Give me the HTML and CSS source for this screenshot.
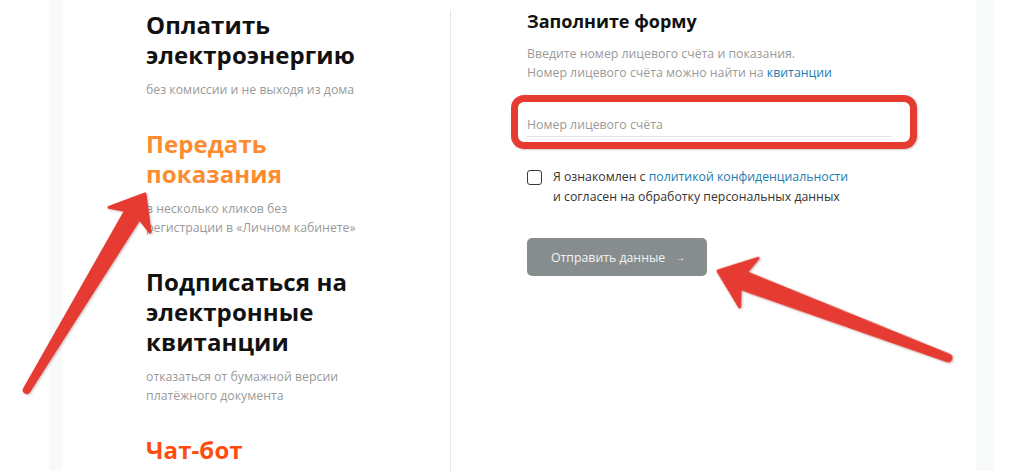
FILE: index.html
```html
<!DOCTYPE html>
<html lang="ru">
<head>
<meta charset="utf-8">
<title>Передать показания</title>
<link rel="stylesheet" href="styles.css">
</head>
<body>
<div class="page">
  <div class="card">
    <div class="services">
      <div class="service">
        <h2 class="service-title">Оплатить<br>электроэнергию</h2>
        <p class="service-desc">без комиссии и не выходя из дома</p>
      </div>
      <div class="service">
        <h2 class="service-title service-title--active">Передать<br>показания</h2>
        <p class="service-desc">в несколько кликов без<br>регистрации в «Личном кабинете»</p>
      </div>
      <div class="service">
        <h2 class="service-title">Подписаться на<br>электронные<br>квитанции</h2>
        <p class="service-desc">отказаться от бумажной версии<br>платёжного документа</p>
      </div>
      <div class="service">
        <h2 class="service-title service-title--bot">Чат-бот</h2>
        <p class="service-desc">задать вопрос</p>
      </div>
    </div>
    <div class="divider"></div>
    <form class="form">
      <h3 class="form-title">Заполните форму</h3>
      <p class="form-desc">Введите номер лицевого счёта и показания.<br>Номер лицевого счёта можно найти на <a class="link" href="#">квитанции</a></p>
      <div class="field">
        <input class="field-input" type="text" placeholder="Номер лицевого счёта">
        <span class="highlight"></span>
      </div>
      <label class="agree">
        <span class="checkbox"></span>
        <span class="agree-text">Я ознакомлен с <a class="link" href="#">политикой конфиденциальности</a><br>и согласен на обработку персональных данных</span>
      </label>
      <button class="submit" type="button">Отправить данные<span class="submit-arrow">→</span></button>
    </form>
  </div>
</div>
<svg class="annotations" width="1024" height="471" viewBox="0 0 1024 471" aria-hidden="true">
  <defs>
    <filter id="shadow" x="-20%" y="-20%" width="140%" height="140%">
      <feDropShadow dx="1" dy="1" stdDeviation="1" flood-color="#000" flood-opacity="0.25"/>
    </filter>
  </defs>
  <g filter="url(#shadow)" fill="#e53b31" stroke="#e53b31" stroke-width="3" stroke-linejoin="round">
    <path transform="translate(145 194) rotate(-58.9)" d="M0 0 L-30 -24 L-24 -8 L-229 -2.5 A2.5 2.5 0 0 0 -229 2.5 L-24 8 L-30 24 Z"/>
    <path transform="translate(718 271) rotate(-159.3)" d="M0 0 L-33 -26 L-27 -8.5 L-246 -3 A3 3 0 0 0 -246 3 L-27 8.5 L-33 26 Z"/>
  </g>
</svg>
</body>
</html>
```

FILE: styles.css
```css
* { box-sizing: border-box; }

html, body {
  margin: 0;
  padding: 0;
  background: #ffffff;
  font-family: "Open Sans", "Noto Sans", "Liberation Sans", sans-serif;
  overflow: hidden;
}

.page {
  margin-left: 49px;
  width: 944px;
  height: 471px;
  padding: 0 17px 0 13px;
  background: #f8f9f9;
}

.card {
  height: 471px;
  background: #ffffff;
  display: grid;
  grid-template-columns: 388px 1px 1fr;
  overflow: hidden;
}

.services {
  padding: 10px 0 0 84px;
  display: flex;
  flex-direction: column;
  gap: 30px;
}

.service-title {
  margin: 0;
  font-size: 24px;
  line-height: 30px;
  font-weight: 700;
  color: #111111;
  letter-spacing: 0.1px;
}

.service-title--active { color: #fd8b2f; }
.service-title--bot { color: #ff4b0c; }

.service-desc {
  margin: 10px 0 0;
  font-size: 12.3px;
  line-height: 19px;
  color: #9a9a9a;
}

.divider {
  margin-top: 10px;
  background: #e6e6e6;
}

.form {
  padding: 9px 0 0 76px;
  display: flex;
  flex-direction: column;
  align-items: flex-start;
}

.form-title {
  margin: 0;
  font-size: 18px;
  line-height: 24px;
  font-weight: 700;
  color: #111111;
}

.form-desc {
  margin: 10.5px 0 0;
  font-size: 12.3px;
  line-height: 19px;
  color: #9a9a9a;
}

.link {
  color: #1b7cb2;
  text-decoration: none;
}

.field {
  position: relative;
  margin-top: 25.5px;
  width: 365px;
}

.field-input {
  display: block;
  width: 100%;
  height: 30px;
  padding: 5px 0 0;
  border: 0;
  border-bottom: 1px solid #e4e4e4;
  outline: none;
  font-family: inherit;
  font-size: 12.3px;
  color: #333333;
  background: transparent;
}

.field-input::placeholder { color: #9a9a9a; }

.highlight {
  position: absolute;
  left: -16px;
  right: -25px;
  top: -12px;
  bottom: -12px;
  border: 7px solid #e53b31;
  border-radius: 13px;
  box-shadow: 1px 1px 2px rgba(0,0,0,0.2);
  pointer-events: none;
}

.agree {
  margin-top: 30px;
  display: flex;
  align-items: flex-start;
  gap: 11px;
  cursor: pointer;
}

.checkbox {
  flex: none;
  margin-top: 3px;
  width: 15px;
  height: 15px;
  border: 1.5px solid #3a3a3a;
  border-radius: 3px;
  background: #ffffff;
}

.agree-text {
  font-size: 12.3px;
  line-height: 20px;
  color: #333333;
}

.submit {
  margin-top: 31px;
  width: 180px;
  height: 38px;
  padding: 0 0 0 24px;
  border: 0;
  border-radius: 5px;
  background: #878d8f;
  color: #f2f3f3;
  font-family: inherit;
  font-size: 12.3px;
  text-align: left;
  display: flex;
  align-items: center;
}

.submit-arrow {
  margin-left: 10px;
  font-size: 10px;
}

.annotations {
  position: absolute;
  top: 0;
  left: 0;
  pointer-events: none;
}
```
